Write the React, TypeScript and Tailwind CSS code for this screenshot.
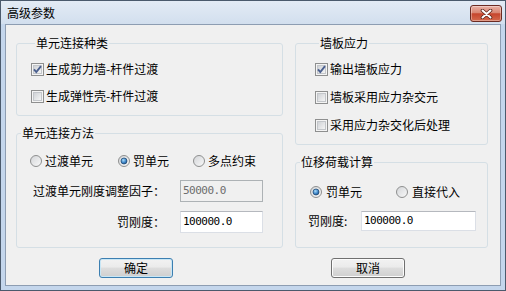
function Check({ checked }: { checked?: boolean }) {
  return (
    <svg width="13" height="13" viewBox="0 0 13 13" className="shrink-0">
      <defs>
        <linearGradient id="cbFill" x1="0" y1="0" x2="1" y2="1">
          <stop offset="0" stopColor="#cdd0d4" />
          <stop offset="1" stopColor="#f7f7f7" />
        </linearGradient>
      </defs>
      <rect x="0.5" y="0.5" width="12" height="12" fill="#f4f4f4" stroke="#8e8f8f" />
      <rect x="2.5" y="2.5" width="8" height="8" fill="url(#cbFill)" stroke="#c3c6ca" />
      {checked && (
        <path d="M3 6.3 L5.3 9 L10 3.2" fill="none" stroke="#4a5f8e" strokeWidth="1.9" />
      )}
    </svg>
  );
}

function Radio({ checked }: { checked?: boolean }) {
  return (
    <svg width="12" height="12" viewBox="0 0 12 12" className="shrink-0">
      <defs>
        <linearGradient id="rbFill" x1="0" y1="0" x2="1" y2="1">
          <stop offset="0" stopColor="#d2d4d7" />
          <stop offset="1" stopColor="#fafafa" />
        </linearGradient>
        <radialGradient id="rbDot" cx="0.4" cy="0.35" r="0.7">
          <stop offset="0" stopColor="#a9dcfa" />
          <stop offset="0.6" stopColor="#3f86c8" />
          <stop offset="1" stopColor="#1b4f86" />
        </radialGradient>
      </defs>
      <circle cx="6" cy="6" r="5.5" fill="url(#rbFill)" stroke="#8e8f8f" />
      {checked && <circle cx="6" cy="6" r="3" fill="url(#rbDot)" stroke="#1c456f" strokeWidth="0.7" />}
    </svg>
  );
}

function Input({ value, disabled, w, h }: { value: string; disabled?: boolean; w: string; h: string }) {
  return (
    <div
      className={`${w} ${h} flex items-center pl-[2px] border font-['DejaVu_Sans_Mono',monospace] text-[11px] tracking-[-0.5px] ${
        disabled
          ? 'bg-[#f0f0f0] border-[#adb2b5] text-[#6d6d6d]'
          : 'bg-white border-[#dbdfe6] border-t-[#b5b8be] text-black'
      }`}
    >
      {value}
    </div>
  );
}

function Group({ title, className, children }: { title: string; className: string; children: React.ReactNode }) {
  return (
    <fieldset className={`border border-[#d5dfe5] rounded-[3px] ${className}`}>
      <legend className="ml-[4px] px-[1px] leading-[14px]">{title}</legend>
      {children}
    </fieldset>
  );
}

export default function App() {
  return (
    <div className="w-[506px] h-[291px] flex flex-col bg-[#c4d6ec] border border-[#4b5a6c] font-['Noto_Sans_CJK_SC',sans-serif] text-[12px] text-black select-none">
      <div className="h-[23px] flex items-center justify-between bg-[linear-gradient(#e3ebf5,#d2dfee)]">
        <span className="pl-[6px]">高级参数</span>
        <div className="self-start mt-[4px] mr-[3px] w-[32px] h-[17px] flex items-center justify-center rounded-[3px] border border-[#6b2b22] bg-[linear-gradient(#eab2a5,#d98672_45%,#c6452c_52%,#d46a4d)] shadow-[inset_0_0_0_1px_rgba(255,255,255,0.35)]">
          <svg width="13" height="10" viewBox="0 0 13 10">
            <path d="M2.5 1.5 L10.5 8.5 M10.5 1.5 L2.5 8.5" stroke="#5a2318" strokeWidth="3.6" strokeLinecap="round" />
            <path d="M2.5 1.5 L10.5 8.5 M10.5 1.5 L2.5 8.5" stroke="#ffffff" strokeWidth="2" strokeLinecap="round" />
          </svg>
        </div>
      </div>

      <div className="flex-1 mx-[4px] mb-[4px] bg-[#f0f0f0] border border-[#8d9db2] pt-[11px] pl-[10px]">
        <div className="flex gap-[12px]">
          <div className="w-[267px] flex flex-col gap-[10px]">
            <Group title="单元连接种类" className="h-[80px] pl-[14px]">
              <div className="flex flex-col gap-[11px] mt-[11px]">
                <div className="flex items-center h-[16px] gap-[2px]">
                  <Check checked />
                  <span>生成剪力墙-杆件过渡</span>
                </div>
                <div className="flex items-center h-[16px] gap-[2px]">
                  <Check />
                  <span>生成弹性壳-杆件过渡</span>
                </div>
              </div>
            </Group>

            <Group title="单元连接方法" className="h-[122px]">
              <div className="flex items-center h-[16px] mt-[13px] pl-[13px]">
                <div className="w-[88px] flex items-center gap-[3px]">
                  <Radio />
                  <span>过渡单元</span>
                </div>
                <div className="w-[75px] flex items-center gap-[3px]">
                  <Radio checked />
                  <span>罚单元</span>
                </div>
                <div className="flex items-center gap-[3px]">
                  <Radio />
                  <span>多点约束</span>
                </div>
              </div>
              <div className="flex items-center mt-[11px]">
                <span className="w-[148px] text-right">过渡单元刚度调整因子：</span>
                <div className="ml-[15px]">
                  <Input value="50000.0" disabled w="w-[83px]" h="h-[22px]" />
                </div>
              </div>
              <div className="flex items-center mt-[9px]">
                <span className="w-[148px] text-right">罚刚度：</span>
                <div className="ml-[15px]">
                  <Input value="100000.0" w="w-[83px]" h="h-[22px]" />
                </div>
              </div>
            </Group>
          </div>

          <div className="w-[193px] flex flex-col gap-[10px]">
            <Group title="墙板应力" className="h-[109px] pl-[19px]">
              <div className="flex flex-col gap-[12px] mt-[11px]">
                <div className="flex items-center h-[16px] gap-[2px]">
                  <Check checked />
                  <span>输出墙板应力</span>
                </div>
                <div className="flex items-center h-[16px] gap-[2px]">
                  <Check />
                  <span>墙板采用应力杂交元</span>
                </div>
                <div className="flex items-center h-[16px] gap-[2px]">
                  <Check />
                  <span>采用应力杂交化后处理</span>
                </div>
              </div>
            </Group>

            <Group title="位移荷载计算" className="h-[93px]">
              <div className="flex items-center h-[16px] mt-[15px] pl-[14px]">
                <div className="w-[86px] flex items-center gap-[4px]">
                  <Radio checked />
                  <span>罚单元</span>
                </div>
                <div className="flex items-center gap-[4px]">
                  <Radio />
                  <span>直接代入</span>
                </div>
              </div>
              <div className="flex items-center mt-[11px] pl-[12px]">
                <span className="w-[53px]">罚刚度:</span>
                <Input value="100000.0" w="w-[115px]" h="h-[20px]" />
              </div>
            </Group>
          </div>
        </div>

        <div className="flex mt-[10px]">
          <div className="ml-[83px] w-[74px] h-[20px] flex items-center justify-center rounded-[3px] border border-[#3c7fb1] bg-[linear-gradient(#f2f2f2,#ebebeb_45%,#dddddd_50%,#cfcfcf)] shadow-[inset_0_0_0_1px_#c8e6f5]">
            确定
          </div>
          <div className="ml-[158px] w-[74px] h-[20px] flex items-center justify-center rounded-[3px] border border-[#707070] bg-[linear-gradient(#f2f2f2,#ebebeb_45%,#dddddd_50%,#cfcfcf)] shadow-[inset_0_0_0_1px_#fcfcfc]">
            取消
          </div>
        </div>
      </div>
    </div>
  );
}
